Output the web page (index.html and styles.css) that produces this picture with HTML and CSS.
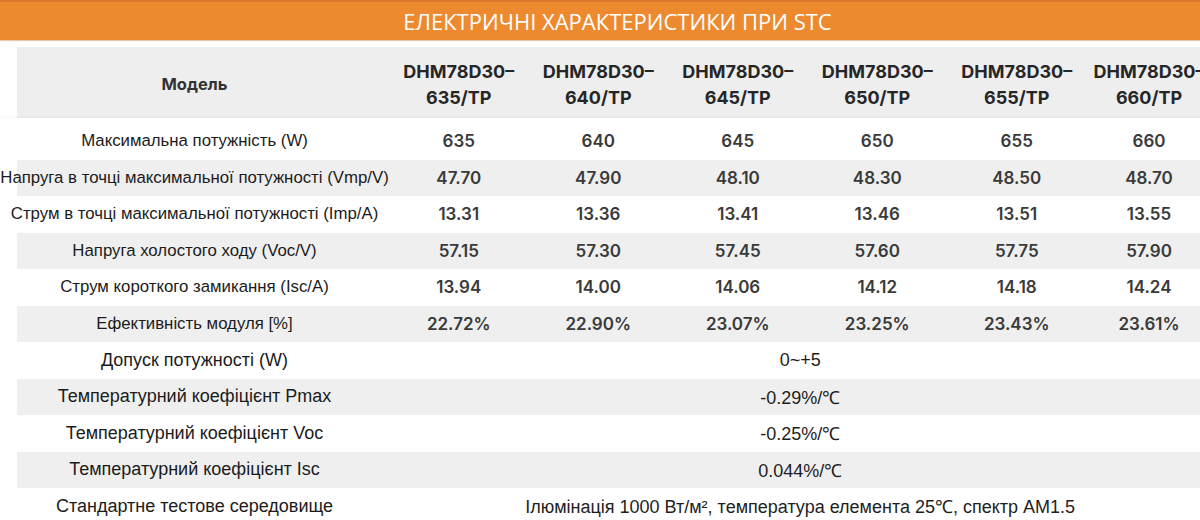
FILE: index.html
```html
<!DOCTYPE html>
<html lang="uk">
<head>
<meta charset="utf-8">
<title>Електричні характеристики</title>
<link rel="stylesheet" href="styles.css">
</head>
<body>
<div class="page">
  <div class="title-bar">ЕЛЕКТРИЧНІ ХАРАКТЕРИСТИКИ ПРИ STC</div>
  <div class="spec">
    <div class="row head">
      <div class="label model">Модель</div>
      <div class="val model-name">DHM78D30–<br>635/TP</div>
      <div class="val model-name">DHM78D30–<br>640/TP</div>
      <div class="val model-name">DHM78D30–<br>645/TP</div>
      <div class="val model-name">DHM78D30–<br>650/TP</div>
      <div class="val model-name">DHM78D30–<br>655/TP</div>
      <div class="val model-name">DHM78D30–<br>660/TP</div>
    </div>
    <div class="row">
      <div class="label">Максимальна потужність (W)</div>
      <div class="val num">635</div><div class="val num">640</div><div class="val num">645</div><div class="val num">650</div><div class="val num">655</div><div class="val num">660</div>
    </div>
    <div class="row alt">
      <div class="label">Напруга в точці максимальної потужності (Vmp/V)</div>
      <div class="val num">47.70</div><div class="val num">47.90</div><div class="val num">48.10</div><div class="val num">48.30</div><div class="val num">48.50</div><div class="val num">48.70</div>
    </div>
    <div class="row">
      <div class="label">Струм в точці максимальної потужності (Imp/A)</div>
      <div class="val num">13.31</div><div class="val num">13.36</div><div class="val num">13.41</div><div class="val num">13.46</div><div class="val num">13.51</div><div class="val num">13.55</div>
    </div>
    <div class="row alt">
      <div class="label">Напруга холостого ходу (Voc/V)</div>
      <div class="val num">57.15</div><div class="val num">57.30</div><div class="val num">57.45</div><div class="val num">57.60</div><div class="val num">57.75</div><div class="val num">57.90</div>
    </div>
    <div class="row">
      <div class="label">Струм короткого замикання (Isc/A)</div>
      <div class="val num">13.94</div><div class="val num">14.00</div><div class="val num">14.06</div><div class="val num">14.12</div><div class="val num">14.18</div><div class="val num">14.24</div>
    </div>
    <div class="row alt">
      <div class="label">Ефективність модуля [%]</div>
      <div class="val num">22.72%</div><div class="val num">22.90%</div><div class="val num">23.07%</div><div class="val num">23.25%</div><div class="val num">23.43%</div><div class="val num">23.61%</div>
    </div>
    <div class="row plain">
      <div class="label">Допуск потужності (W)</div>
      <div class="val span">0~+5</div>
    </div>
    <div class="row alt plain">
      <div class="label">Температурний коефіцієнт Pmax</div>
      <div class="val span">-0.29%/℃</div>
    </div>
    <div class="row plain">
      <div class="label">Температурний коефіцієнт Voc</div>
      <div class="val span">-0.25%/℃</div>
    </div>
    <div class="row alt plain">
      <div class="label">Температурний коефіцієнт Isc</div>
      <div class="val span">0.044%/℃</div>
    </div>
    <div class="row plain">
      <div class="label">Стандартне тестове середовище</div>
      <div class="val span">Ілюмінація 1000 Вт/м², температура елемента 25℃, спектр AM1.5</div>
    </div>
  </div>
</div>
</body>
</html>
```
FILE: styles.css
```css
html, body {
  margin: 0;
  padding: 0;
  background: #ffffff;
}
body {
  width: 1200px;
  height: 520px;
  overflow: hidden;
  font-family: "Liberation Sans", Arial, sans-serif;
  color: #1e1e1e;
}
.page {
  width: 1200px;
  overflow: hidden;
}
.title-bar {
  height: 38px;
  padding-left: 35px;
  border-top: 2px solid #d9782b;
  background: #ed8a2f;
  color: #ffffff;
  font-family: "Open Sans", "Liberation Sans", sans-serif;
  font-size: 22px;
  line-height: 38px;
  text-align: center;
  box-shadow: 0 1px 1px rgba(180, 100, 30, 0.35);
}
.spec {
  width: 1212px;
  padding-top: 7px;
}
.row {
  display: grid;
  grid-template-columns: 389px repeat(5, 139.5px) 125px;
  height: 36.5px;
  align-items: center;
}
.row.alt {
  background: linear-gradient(to right, transparent 17px, #efefef 17px);
}
.row.head {
  height: 71px;
  margin-bottom: 5px;
  background: linear-gradient(to right, transparent 17px, #eeeeee 17px);
  box-shadow: inset 0 -2px 2px rgba(0, 0, 0, 0.03);
}
.label {
  display: flex;
  justify-content: center;
  font-size: 16.8px;
  white-space: nowrap;
  color: #1b1b1b;
}
.label.model {
  font-family: "Inter", "Liberation Sans", sans-serif;
  font-size: 16.5px;
  font-weight: 700;
  color: #333333;
  padding-top: 2px;
}
.val {
  text-align: center;
  white-space: nowrap;
}
.model-name {
  font-family: "Inter", "Liberation Sans", sans-serif;
  font-size: 18px;
  font-weight: 700;
  line-height: 26px;
  color: #262626;
  padding-top: 5px;
}
.num {
  font-family: "Inter", "Liberation Sans", sans-serif;
  font-size: 17px;
  font-weight: 600;
  color: #3a3a3a;
}
.row.plain .label {
  font-size: 18px;
}
.val.span {
  grid-column: 2 / -1;
  font-size: 18px;
  color: #1e1e1e;
}
```
